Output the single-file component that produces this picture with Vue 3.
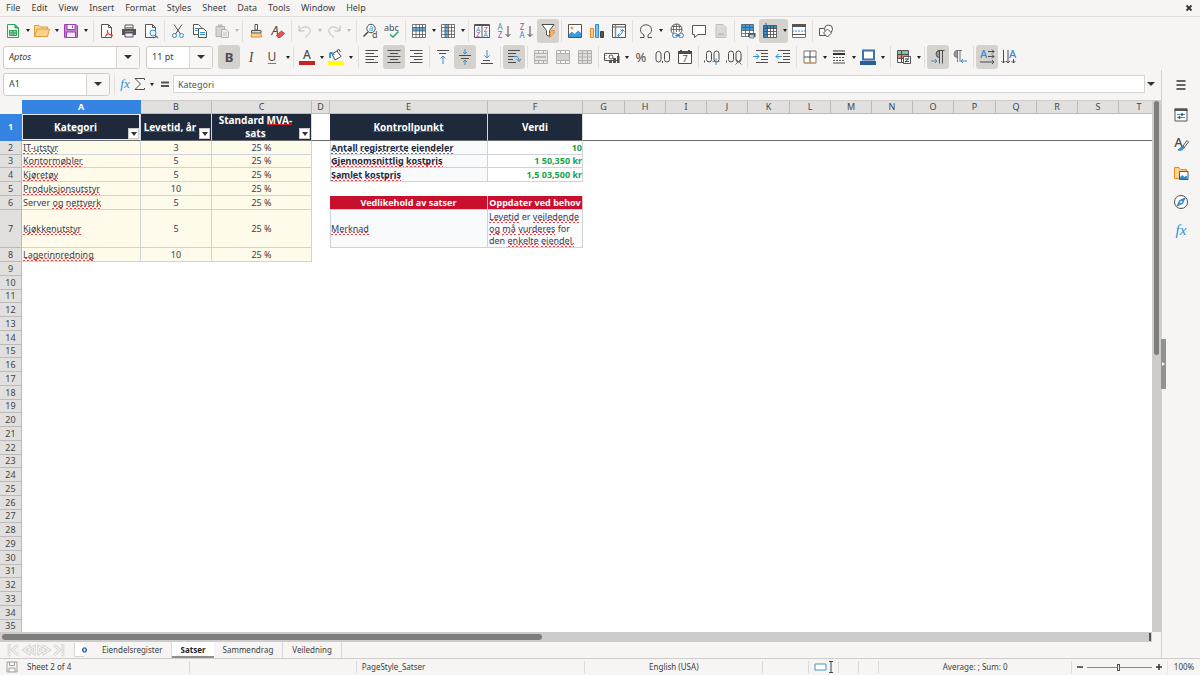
<script setup>
import { ref } from 'vue'

const G = '#4d4d4d'
const B = '#2f8fd3'
const line = (d, c = G, w = 1) => `<path d="${d}" fill="none" stroke="${c}" stroke-width="${w}"/>`
const sheetGrid = '<path d="M1.500 1.500H14.500V14.500H1.500Z" fill="#fff"/>'
const icons = {
  new: '<path d="M2.500 1.500H10L13.500 5V14.500H2.500Z" fill="#eef8f0" stroke="#31a354"/><path d="M10 1.500V5H13.500" fill="#31a354" stroke="#31a354"/><path d="M4.500 7.500H11.500V12.500H4.500ZM4.500 10H11.500M8 7.500V12.500" fill="#31a354" fill-opacity=".5" stroke="#31a354"/>',
  open: '<path d="M.5 13.500V2.500H5L6.500 4H13.500V6" fill="#f9d79b" stroke="#e39a37"/><path d="M.5 13.500L3 6H15.500L13.500 13.500Z" fill="#fbd28d" stroke="#e39a37"/>',
  save: '<path d="M1.500 1.500H13L14.500 3V14.500H1.500Z" fill="#c481d2" stroke="#9a3fae"/><path d="M4 1.500H12V6.500H4Z" fill="#fff" stroke="#9a3fae"/><path d="M3.500 9H12.500V14.500H3.500Z" fill="#f7eafa" stroke="#9a3fae"/><path d="M9.500 2.500V5" stroke="#9a3fae"/>',
  pdf: '<path d="M2.500 1.500H9.500L12.500 4.500V14.500H2.500Z" fill="#fff" stroke="#555"/><path d="M9.500 1.500V4.500H12.500" fill="none" stroke="#555"/><path d="M8 7C9 7 9 10 7 13C6.500 14 5.500 13 7.500 12C10 11 14 11.500 14 12.500C13 14 9 11 8.500 8Z" fill="none" stroke="#e0434d"/>',
  print: '<path d="M4 2H12V6H4Z" fill="#fff" stroke="#555"/><path d="M1 6H15V12H1Z" fill="#555"/><path d="M3.500 4.500H12.500M4 8.500H12" stroke="#3aa0e0"/><path d="M4 10H12V14H4Z" fill="#eef" stroke="#555"/>',
  preview: '<path d="M2.500 1.500H9.500L12.500 4.500V14.500H2.500Z" fill="#fff" stroke="#555"/><path d="M9.500 1.500V4.500H12.500" fill="none" stroke="#555"/><circle cx="10" cy="10" r="3" fill="#e9f4fc" stroke="#3a8fd0"/><path d="M12 12L15 15" stroke="#3a8fd0" stroke-width="1.500"/>',
  cut: line('M4 1.500L10.500 11M12 1.500L5.500 11') + '<circle cx="4.500" cy="12.500" r="2" fill="none" stroke="#2f8fd3"/><circle cx="11.500" cy="12.500" r="2" fill="none" stroke="#2f8fd3"/>',
  copy: '<path d="M1.500 1.500H6.500L9.500 4.500V11.500H1.500Z" fill="#fff" stroke="#555"/><path d="M6.500 5.500H11.500L14.500 8.500V14.500H6.500Z" fill="#fff" stroke="#555"/>' + line('M3 5.500H6M3 7.500H5.500M8 9.500H13M8 11.500H13', B),
  paste: '<path d="M2 3.500H10.500V13.500H2Z" fill="#d8d6d4" stroke="#b3b1af"/><path d="M4 1.500H8.500V4.500H4Z" fill="#bbb"/><path d="M7.500 6.500H12L14.500 9V14.500H7.500Z" fill="#eee" stroke="#b3b1af"/><path d="M9 10H13M9 12H13" stroke="#c2c0be"/>',
  brush: '<path d="M7 1.500H9.500V7H7Z" fill="#fff" stroke="#555"/><path d="M3.500 7.500H13V10H3.500Z" fill="#ddd" stroke="#555"/><path d="M3.500 10.500H13L13.500 14H3Z" fill="#fbd28d" stroke="#e38a27"/>',
  clear: '<text x="1.500" y="11.500" font-family="Noto Sans" font-style="italic" font-size="13" fill="#4d4d4d">A</text><path d="M6.500 12.500L11.500 8L14.500 10.500L10 14.500H8Z" fill="#e8505b" stroke="#d9343f"/>',
  undo: line('M2 2.500V8H7.500M2 8C4 4 11 2 13 6.500C14 10 10.500 12 8 14.500', '#bdbbb9'),
  redo: line('M14 2.500V8H8.500M14 8C12 4 5 2 3 6.500C2 10 5.500 12 8 14.500', '#bdbbb9'),
  find: '<circle cx="9" cy="5.500" r="4.200" fill="#fff" stroke="#4d4d4d"/><path d="M6 9L1.500 13.500" stroke="#4d4d4d" stroke-width="1.600"/><text x="6.800" y="8" font-family="Noto Sans" font-size="8" fill="#2f8fd3">a</text><text x="10" y="15" font-family="Noto Sans" font-size="9" fill="#4d4d4d">d</text>',
  spell: '<text x="0" y="8" font-family="Noto Sans" font-size="9" fill="#4d4d4d">abc</text>' + line('M6 11.500L9 14L14.500 8.500', '#2aa564', 1.5),
  row: sheetGrid + '<path d="M1.500 4.500H14.500V8H1.500Z" fill="#59b1ec"/>' + line('M1.500 1.500H14.500V14.500H1.500ZM1.500 4.500H14.500M1.500 8H14.500M1.500 11.500H14.500M5 1.500V14.500M8.500 1.500V14.500M11.500 1.500V14.500', '#555', .8),
  col: sheetGrid + '<path d="M5 1.500H8.500V14.500H5Z" fill="#59b1ec"/>' + line('M1.500 1.500H14.500V14.500H1.500ZM1.500 4.500H14.500M1.500 8H14.500M1.500 11.500H14.500M5 1.500V14.500M8.500 1.500V14.500M11.500 1.500V14.500', '#555', .8),
  sort: '<path d="M.5 1.500H15.500V14.500H.5ZM8 1.500V14.500M.5 2.500H15.500" fill="#fff" stroke="#555"/><g font-family="Noto Sans" font-size="7" text-anchor="middle"><text x="4.300" y="8.500" fill="#2f8fd3">A</text><text x="4.300" y="14" fill="#a845ba">Z</text><text x="11.700" y="8.500" fill="#a845ba">Z</text><text x="11.700" y="14" fill="#2f8fd3">A</text></g>',
  az: '<g font-family="Noto Sans" font-size="8" text-anchor="middle"><text x="4" y="7" fill="#2f8fd3">A</text><text x="4" y="14.500" fill="#a845ba">Z</text></g>' + line('M12 3V13.500M9.500 11L12 13.500L14.500 11'),
  za: '<g font-family="Noto Sans" font-size="8" text-anchor="middle"><text x="4" y="7" fill="#a845ba">Z</text><text x="4" y="14.500" fill="#2f8fd3">A</text></g>' + line('M12 3V13.500M9.500 11L12 13.500L14.500 11'),
  filter: '<path d="M2 1.500H14L9.500 7.500V13.500L6.500 12V7.500Z" fill="#fff" stroke="#4d4d4d"/><path d="M11.500 7.500H14.500L13 10H14.500L9.500 14.500L10.500 11H9.500Z" fill="#f9bd72" stroke="#e8861d" stroke-width=".8"/>',
  image: '<path d="M1.500 1.500H14.500V14.500H1.500Z" fill="#fff" stroke="#555"/><path d="M2 14V11L5 8.500L7.500 11L11 7.500L14 10V14Z" fill="#3d9bdc"/><circle cx="5" cy="5" r="1.500" fill="#f0a030"/>',
  chart: '<path d="M1.500 5.500H4.500V14.500H1.500Z" fill="#fbd28d" stroke="#e38a27"/><path d="M6.500 1.500H9.500V14.500H6.500Z" fill="#7fc1ef" stroke="#2f8fd3"/><path d="M11.500 8.500H14.500V14.500H11.500Z" fill="#555" stroke="#444"/>',
  pivot: '<path d="M1.500 1.500H14.500V14.500H1.500Z" fill="#fff" stroke="#555"/>' + line('M2 4H14M4.500 2V14', '#888', 1.5) + line('M7 12.500C10 12.500 11.500 10 11.500 7M9.500 8.500L11.500 6.500L13.500 8.500M8.500 10.500L6.500 12.500L8.500 14', B),
  omega: line('M2 14.500H6V12C3.500 10.500 2.500 9 2.500 6.800C2.500 3.500 5 1.800 8 1.800C11 1.800 13.500 3.500 13.500 6.800C13.500 9 12.500 10.500 10 12V14.500H14'),
  link: '<circle cx="7.500" cy="6.500" r="5.500" fill="#fff" stroke="#555"/>' + line('M2 6.500H13M7.500 1V9M3 3.500H12M5 1.800Q3.500 6 5 10M10 1.800Q11.500 6 10 9', '#555', .8) + '<g fill="#f6f5f4" stroke="#2f7fd6"><rect x="3.500" y="10.500" width="5" height="4" rx="2"/><rect x="9.500" y="10.500" width="5" height="4" rx="2"/></g><path d="M6.500 12.500H11.500" stroke="#2f7fd6"/>',
  comment: '<path d="M1.500 2.500H14.500V11.500H7L3.500 14.500V11.500H1.500Z" fill="#fff" stroke="#555"/>',
  hf: '<path d="M3 1.500H10L13 4.500V14.500H3Z" fill="#dddbd9" stroke="#c2c0be"/><path d="M5 10H11V12.500H5Z" fill="#c4c2c0"/>',
  parea: '<path d="M1.500 1.500H13.500V13.500H1.500Z" fill="#fff"/><path d="M1.500 1.500H13.500V7.500H1.500Z" fill="#3d9bdc"/>' + line('M1.500 1.500H13.500V13.500H1.500ZM1.500 4.500H13.500M1.500 7.500H13.500M1.500 10.500H13.500M5.500 1.500V13.500M9.500 1.500V13.500', '#555', .8) + '<path d="M8 10H15.500V14H8Z" fill="#555"/><path d="M9.500 11.500H14V15H9.500Z" fill="#a8d4f2" stroke="#555" stroke-width=".6"/>',
  freeze: '<path d="M1.500 2.500H14.500V14.500H1.500Z" fill="#fff"/><path d="M1.500 2.500H14.500V5.500H5.500V14.500H1.500Z" fill="#2f8fd3"/>' + line('M1.500 2.500H14.500V14.500H1.500ZM1.500 5.500H14.500M1.500 8.500H14.500M1.500 11.500H14.500M5.500 2.500V14.500M8.500 2.500V14.500M11.500 2.500V14.500', '#444', .8) + line('M4 0V5M1 3H6', '#1c6db0'),
  split: '<path d="M1.500 1.500H14.500V14.500H1.500Z" fill="#fff" stroke="#777"/><path d="M1 1H15V4H1ZM1 11H15V12H1Z" fill="#555"/><path d="M1 8H15" stroke="#2f8fd3" stroke-dasharray="2 1"/>',
  shapes: '<path d="M1.500 5.500H8.500V12.500H1.500Z" fill="#fff" stroke="#555"/><circle cx="10.500" cy="6" r="4" fill="#fff" stroke="#555"/><path d="M9.500 6L13.500 10L9.500 14L5.500 10Z" fill="#fff" stroke="#555"/>',
  bold: '<text x="8" y="13" text-anchor="middle" font-family="Noto Sans" font-weight="bold" font-size="13" fill="#4d4d4d">B</text>',
  italic: '<text x="8" y="13" text-anchor="middle" font-family="Liberation Serif" font-style="italic" font-size="14" fill="#4d4d4d">I</text>',
  underline: '<text x="7" y="12" text-anchor="middle" font-family="Noto Sans" font-size="12" fill="#4d4d4d">U</text>' + line('M3 14.500H11', B),
  fontcolor: '<text x="8" y="10" text-anchor="middle" font-family="Noto Sans" font-weight="500" font-size="12" fill="#4d4d4d">A</text><path d="M0 12H16V16H0Z" fill="#c9211e"/>',
  hilite: '<path d="M4 5L9 2L13 7.500L7 11Z" fill="#fff" stroke="#4d4d4d"/><path d="M2 9V4.500C2 3.500 5 3.500 6 6" fill="none" stroke="#2f8fd3" stroke-width="1.800"/><path d="M9 2L10.500 0L12.500 3" fill="none" stroke="#4d4d4d"/><path d="M0 12H16V16H0Z" fill="#ffff00"/>',
  left: line('M1.500 1.500H14M1.500 4.500H10M1.500 7.500H14M1.500 10.500H10M1.500 13.500H14'),
  center: line('M1.500 1.500H14.500M4 4.500H12M1.500 7.500H14.500M4 10.500H12M1.500 13.500H14.500'),
  right: line('M2 1.500H14.500M6 4.500H14.500M2 7.500H14.500M6 10.500H14.500M2 13.500H14.500'),
  top: line('M2 1.500H14M4 4.500H11') + line('M8 7V15M5.500 9.500L8 7L10.500 9.500', B),
  middle: line('M2 6.500H14M4 9.500H12') + line('M8 0V5M6 3L8 5L10 3M8 16V11M6 13L8 11L10 13', B),
  bottom: line('M2 14.500H14M4 11.500H11') + line('M8 1V9M5.500 6.500L8 9L10.500 6.500', B),
  wrap: line('M2 1.500H14M2 4.500H10M2 7.500H8M2 10.500H7M2 13.500H10') + line('M8 7.500H10C12 7.500 13 9 13 12.500M10.500 10L13 12.500L15 10', B),
  merge1: '<path d="M1.500 2.500H14.500V13.500H1.500Z" fill="#e6e4e2"/>' + line('M1.500 1.500H14.500V14.500H1.500ZM1.500 4.500H14.500M1.500 11.500H14.500M5.500 1.500V4.500M10.500 1.500V4.500M5.500 11.500V14.500M10.500 11.500V14.500', '#b2b0ae') + line('M3 8H13', '#c0bebc', 2),
  merge2: '<path d="M1.500 4.500H14.500V11.500H1.500Z" fill="#d4d2d0"/>' + line('M1.500 1.500H14.500V14.500H1.500ZM1.500 4.500H14.500M1.500 11.500H14.500M5.500 1.500V4.500M10.500 1.500V4.500M5.500 11.500V14.500M10.500 11.500V14.500', '#b2b0ae'),
  merge3: '<path d="M1.500 1.500H14.500V14.500H1.500Z" fill="#e0dedc"/>' + line('M1.500 1.500H14.500V14.500H1.500ZM1.500 4.500H14.500M1.500 8H14.500M1.500 11.500H14.500M5.500 1.500V14.500M10.500 1.500V14.500', '#b2b0ae'),
  currency: '<path d="M.5 4.500H14.500V11.500H.5Z" fill="#fff" stroke="#555"/><circle cx="7" cy="8" r="2" fill="none" stroke="#555"/><path d="M5 12H8V14H5ZM9 9H12V14H9ZM13 7H15.500V14H13Z" fill="#555"/><path d="M2 6V7M2 9V10" stroke="#555"/>',
  percent: '<text x="8" y="13" text-anchor="middle" font-family="Noto Sans" font-size="13" fill="#4d4d4d">%</text>',
  number: '<g fill="none" stroke="#4d4d4d"><rect x="1" y="2.500" width="5" height="10.500" rx="2.500"/><rect x="9.500" y="2.500" width="5" height="10.500" rx="2.500"/></g><path d="M7.500 12V14" stroke="#4d4d4d"/>',
  date: '<path d="M1.500 2.500H14.500V14.500H1.500Z" fill="#fff" stroke="#4d4d4d"/><path d="M1 2H15V5H1ZM3 1H5V3H3ZM11 1H13V3H11Z" fill="#4d4d4d"/><text x="8" y="13" text-anchor="middle" font-family="Noto Sans" font-size="9" fill="#4d4d4d">7</text>',
  decadd: '<g fill="none" stroke="#4d4d4d"><rect x="2.500" y="2" width="5" height="11" rx="2.500"/><rect x="10" y="2" width="5" height="11" rx="2.500"/></g><path d="M.5 11.500V13.500" stroke="#4d4d4d"/><path d="M8.500 12.500H15.500M12 9.500V16" stroke="#2f8fd3"/>',
  decdel: '<g fill="none" stroke="#4d4d4d"><rect x="2.500" y="2" width="5" height="11" rx="2.500"/><rect x="10" y="2" width="5" height="11" rx="2.500"/></g><path d="M.5 11.500V13.500" stroke="#4d4d4d"/><path d="M9.500 9.500L15.500 15.500M15.500 9.500L9.500 15.500" stroke="#e0434d"/>',
  indent: line('M3 1.500H15M8 4.500H15M8 7.500H15M8 10.500H15M3 13.500H15') + line('M0 7.500H6M3.500 5L6 7.500L3.500 10', B),
  outdent: line('M3 1.500H15M8 4.500H15M8 7.500H15M8 10.500H15M3 13.500H15') + line('M7 7.500H1M3.500 5L1 7.500L3.500 10', B),
  borders: '<path d="M2 2H14V14H2Z" fill="#fff" stroke="#777"/>' + line('M8 2V14M2 8H14') + line('M2 14H14', '#e39a37'),
  bstyle: line('M2 2H14', '#333', 1) + line('M2 5H14', '#333', 2) + '<path d="M2 8.500H14M2 11.500H14" stroke="#555" stroke-dasharray="2 1"/>' + line('M2 14H14'),
  bcolor: '<path d="M3 1.500H14V10.500H3Z" fill="#fff" stroke="#3a72ad" stroke-width="2"/><path d="M0 12H16V16H0Z" fill="#2a6099"/>',
  cond: '<path d="M1.500 1.500H12.500V13.500H1.500Z" fill="#fff" stroke="#555"/><path d="M2 2H12V5H2Z" fill="#7ac79a"/><path d="M2 6H12V9H2Z" fill="#f0806a"/>' + line('M1.500 5.500H12.500M1.500 9.500H12.500M5.500 2V13') + '<path d="M7.500 7.500H14.500V14.500H7.500Z" fill="#fff" stroke="#555"/>' + line('M9 10H13M9 12.500H13M12.500 8.500L9.500 13.500'),
  ltr: '<path d="M9.500 1.500A3.500 3.500 0 0 0 9.500 8.500Z" fill="#9c9a98" stroke="#555"/>' + line('M9.500 1V14.500M12.500 1V14.500M8 1.500H14.500') + line('M1 12H7M5 10L7 12L5 14', B),
  rtl: '<path d="M5.500 1.500A3.500 3.500 0 0 0 5.500 8.500Z" fill="#9c9a98" stroke="#777"/>' + line('M5.500 1V13M8 1V13M4 1.500H10', '#777') + line('M15 12H9M11 10L9 12L11 14', B),
  dirh: '<text x="4.500" y="9" text-anchor="middle" font-family="Noto Sans" font-weight="500" font-size="11" fill="#2f8fd3">A</text>' + line('M9 2.500H15M13 .5L15 2.500L13 4.500M9 7.500H15M13 5.500L15 7.500L13 9.500M1 13H15M13 11L15 13L13 15'),
  dirv: '<text x="11.500" y="9" text-anchor="middle" font-family="Noto Sans" font-weight="500" font-size="11" fill="#2f8fd3">A</text>' + line('M2.500 1V14M.5 12L2.500 14L4.500 12M7 1V14M5 12L7 14L9 12M12.500 10V14M10.500 12L12.500 14L14.500 12'),
  fx: '<text x="8" y="12" text-anchor="middle" font-family="Liberation Serif" font-style="italic" font-size="15" fill="#2f8fd3">fx</text>',
  sum: line('M12.500 4V2.500H3L8.500 8L3 13.500H12.500V12'),
  equals: line('M4 6.500H12M4 10H12', '#555', 2),
  menu: line('M3.500 4H12.500M3.500 8H12.500M3.500 12H12.500', '#333', 1.4),
  props: '<path d="M2 2H14V14H2Z" fill="#fff" stroke="#555"/><path d="M1.500 1.500H14.500V4H1.500Z" fill="#555"/>' + line('M4 7.500H12M4 10.500H12', '#2f8fd3') + line('M9 6V9M6.500 9V12', '#555', 1.5),
  styles: '<text x="5.500" y="11" text-anchor="middle" font-family="Noto Sans" font-weight="500" font-size="13" fill="#4d4d4d">A</text><path d="M10 10L14 4.500L15.500 6L11.500 11Z" fill="#fff" stroke="#555"/><path d="M10 10L11.500 11.500C10 14.500 7 14.500 5 14C7.500 13 7.500 10.500 10 10Z" fill="#3d9bdc" stroke="#2f7fbd"/>',
  gallery: '<path d="M1.500 13.500V2.500H6L7.500 4.500H13.500V13.500Z" fill="#fbd28d" stroke="#e38a27"/><path d="M6.500 6.500H15V14.500H6.500Z" fill="#fff" stroke="#555"/><path d="M7 14V12L9.500 10L11.500 12L13 10.500L14.500 12V14Z" fill="#2f8fd3"/>',
  navigator: '<circle cx="8" cy="8" r="6.500" fill="#fff" stroke="#4d4d4d"/><path d="M12 4L9.500 9.500L4 12L6.500 6.500Z" fill="#3d9bdc" stroke="#2474b5" stroke-width=".8"/><circle cx="8" cy="8" r="1" fill="#fff"/>'
}

const caret = (name, label, o = {}) => ({ icon: name, label, caret: true, ...o })
const b = (name, label, o = {}) => ({ icon: name, label, ...o })
const sep = { sep: true }
const wide = { sep: true, wide: true }

const standardBar = [
  caret('new', 'New'), caret('open', 'Open'), caret('save', 'Save'), wide,
  b('pdf', 'Export as PDF'), b('print', 'Print'), b('preview', 'Print Preview'), sep,
  b('cut', 'Cut'), b('copy', 'Copy'), caret('paste', 'Paste', { off: true }), sep,
  b('brush', 'Clone Formatting'), b('clear', 'Clear Formatting'), sep,
  caret('undo', 'Undo', { off: true }), caret('redo', 'Redo', { off: true }), wide,
  b('find', 'Find and Replace'), b('spell', 'Spelling'), sep,
  caret('row', 'Row'), caret('col', 'Column'), sep,
  b('sort', 'Sort'), b('az', 'Sort Ascending'), b('za', 'Sort Descending'), b('filter', 'AutoFilter', { on: true }), sep,
  b('image', 'Insert Image'), b('chart', 'Insert Chart'), b('pivot', 'Pivot Table'), sep,
  caret('omega', 'Special Character', { roomy: true }), b('link', 'Hyperlink'), b('comment', 'Comment'), b('hf', 'Headers and Footers', { off: true }), sep,
  b('parea', 'Print Area'), caret('freeze', 'Freeze Panes', { on: true }), b('split', 'Split Window'), sep,
  b('shapes', 'Draw Functions')
]
const formatBar = [
  b('bold', 'Bold', { on: true }), b('italic', 'Italic'), caret('underline', 'Underline'), sep,
  caret('fontcolor', 'Font Color'), caret('hilite', 'Background Color'), wide,
  b('left', 'Align Left'), b('center', 'Center', { on: true }), b('right', 'Align Right'), sep,
  b('top', 'Align Top'), b('middle', 'Center Vertically', { on: true }), b('bottom', 'Align Bottom'), sep,
  b('wrap', 'Wrap Text', { on: true }), sep,
  b('merge1', 'Merge and Center', { off: true }), b('merge2', 'Merge Cells', { off: true }), b('merge3', 'Unmerge Cells', { off: true }), sep,
  caret('currency', 'Currency'), b('percent', 'Percent'), b('number', 'Number'), b('date', 'Date'), sep,
  b('decadd', 'Add Decimal Place'), b('decdel', 'Delete Decimal Place'), sep,
  b('indent', 'Increase Indent'), b('outdent', 'Decrease Indent'), sep,
  caret('borders', 'Borders'), caret('bstyle', 'Border Style'), caret('bcolor', 'Border Color'), wide,
  caret('cond', 'Conditional Formatting'), sep,
  b('ltr', 'Left-To-Right', { on: true }), b('rtl', 'Right-To-Left'), sep,
  b('dirh', 'Text Direction Horizontal', { on: true }), b('dirv', 'Text Direction Vertical')
]

const menus = ['File', 'Edit', 'View', 'Insert', 'Format', 'Styles', 'Sheet', 'Data', 'Tools', 'Window', 'Help']
const decks = [['menu', 'Sidebar Settings'], ['props', 'Properties'], ['styles', 'Styles'], ['gallery', 'Gallery'], ['navigator', 'Navigator'], ['fx', 'Functions']]
const tabs = ['Eiendelsregister', 'Satser', 'Sammendrag', 'Veiledning']
const navs = [
  ['First sheet', 'M3.500 1V15M14 2L7 8L14 14'],
  ['Previous sheet', 'M8 4L2 8L8 12ZM14 4L8 8L14 12Z'],
  ['Next sheet', 'M2 4L8 8L2 12ZM8 4L14 8L8 12Z'],
  ['Last sheet', 'M12.500 1V15M2 2L9 8L2 14']
]

const fontName = ref('Aptos')
const fontSize = ref('11 pt')
const cellName = ref('A1')
const formula = ref('Kategori')
const zoom = ref(48)

const columns = 'ABCDEFGHIJKLMNOPQRSTUVWXYZ'.split('')
const rowCount = 60

// Words inside square brackets carry the spell-check underline.
const cells = {
  A1: ['[Kategori]', 'head'], B1: ['[Levetid], [år]', 'head'], C1: ['Standard [MVA-] [sats]', 'head'],
  E1: ['[Kontrollpunkt]', 'head'], F1: ['Verdi', 'head'],
  E2: ['[Antall] [registrerte] [eiendeler]', 'check'], F2: ['10', 'value'],
  E3: ['[Gjennomsnittlig] [kostpris]', 'check'], F3: ['1 50,350 kr', 'value'],
  E4: ['[Samlet] [kostpris]', 'check'], F4: ['1,5 03,500 kr', 'value'],
  E6: ['[Vedlikehold] [av] [satser]', 'alert'], F6: ['[Oppdater] [ved] [behov]', 'alert'],
  E7: ['[Merknad]', 'note'],
  F7: ['[Levetid] er [veiledende] [og] [må] [vurderes] for den [enkelte] [eiendel.]', 'note']
}
const rates = [
  ['[IT-utstyr]', '3'], ['[Kontormøbler]', '5'], ['[Kjøretøy]', '5'], ['[Produksjonsutstyr]', '10'],
  ['Server [og] [nettverk]', '5'], ['[Kjøkkenutstyr]', '5'], ['[Lagerinnredning]', '10']
]
rates.forEach(([name, years], i) => {
  cells['A' + (i + 2)] = [name, 'rate']
  cells['B' + (i + 2)] = [years, 'rate mid']
  cells['C' + (i + 2)] = ['25 %', 'rate mid']
})
const segments = (text) => text.split(/(\[[^\]]+\])/).filter(Boolean)
  .map((s) => s[0] === '[' ? { text: s.slice(1, -1), bad: true } : { text: s, bad: false })
const rows = Array.from({ length: rowCount }, (_, r) => ({
  n: r + 1,
  cells: columns.map((c) => {
    const id = c + (r + 1)
    const cell = cells[id]
    return { id, kind: cell ? cell[1] : '', parts: cell ? segments(cell[0]) : [] }
  })
}))
</script>

<template>
  <div class="app">
    <nav class="menubar" aria-label="Main menu">
      <button v-for="m in menus" :key="m" type="button">{{ m }}</button>
      <button type="button" class="close" aria-label="Close document">
        <svg width="8" height="8" viewBox="0 0 8 8"><path d="M1.500 1.500L6.500 6.500M6.500 1.500L1.500 6.500" stroke="#333" stroke-width="1.800" /></svg>
      </button>
    </nav>

    <div class="toolbar" role="toolbar" aria-label="Standard">
      <template v-for="(t, i) in standardBar" :key="i">
        <span v-if="t.sep" class="sep" :class="{ wide: t.wide }"></span>
        <span v-else class="tool" :class="{ on: t.on, off: t.off, roomy: t.roomy }">
          <button type="button" class="ico" :aria-label="t.label" :disabled="t.off">
            <svg width="16" height="16" viewBox="0 0 16 16" v-html="icons[t.icon]"></svg>
          </button>
          <button v-if="t.caret" type="button" class="caret" :aria-label="t.label + ' options'"></button>
        </span>
      </template>
    </div>

    <div class="toolbar format" role="toolbar" aria-label="Formatting">
      <div class="combo font">
        <input v-model="fontName" aria-label="Font name">
        <button type="button" aria-label="Choose font"></button>
      </div>
      <div class="combo size">
        <input v-model="fontSize" aria-label="Font size">
        <button type="button" aria-label="Choose font size"></button>
      </div>
      <template v-for="(t, i) in formatBar" :key="i">
        <span v-if="t.sep" class="sep" :class="{ wide: t.wide }"></span>
        <span v-else class="tool" :class="{ on: t.on, off: t.off }">
          <button type="button" class="ico" :aria-label="t.label" :disabled="t.off">
            <svg width="16" height="16" viewBox="0 0 16 16" v-html="icons[t.icon]"></svg>
          </button>
          <button v-if="t.caret" type="button" class="caret" :aria-label="t.label + ' options'"></button>
        </span>
      </template>
    </div>

    <div class="body">
      <main class="work">
        <div class="formulabar">
          <div class="combo name">
            <input v-model="cellName" aria-label="Name box">
            <button type="button" aria-label="Choose range"></button>
          </div>
          <span class="sep"></span>
          <button type="button" class="fbtn" aria-label="Function wizard"><svg width="14" height="14" viewBox="0 0 16 16" v-html="icons.fx"></svg></button>
          <button type="button" class="fbtn" aria-label="Select function"><svg width="16" height="16" viewBox="0 0 16 16" v-html="icons.sum"></svg></button>
          <button type="button" class="caret" aria-label="Function options"></button>
          <button type="button" class="fbtn eq" aria-label="Formula"><svg width="16" height="16" viewBox="0 0 16 16" v-html="icons.equals"></svg></button>
          <input v-model="formula" class="formula" aria-label="Input line">
          <button type="button" class="expand" aria-label="Expand formula bar"></button>
        </div>

        <div class="sheet">
          <div class="grid">
            <table>
              <colgroup>
                <col class="c-head">
                <col v-for="c in columns" :key="c" :class="'c-' + c">
              </colgroup>
              <thead>
                <tr>
                  <td class="corner"></td>
                  <th v-for="c in columns" :key="c" scope="col" :class="{ sel: c === 'A' }">{{ c }}</th>
                </tr>
              </thead>
              <tbody>
                <tr v-for="r in rows" :key="r.n" :class="'r' + r.n">
                  <th scope="row" :class="{ sel: r.n === 1 }">{{ r.n }}</th>
                  <td v-for="c in r.cells" :key="c.id" :class="[c.kind, c.id]"><template v-for="(p, i) in c.parts" :key="i"><span :class="{ bad: p.bad }">{{ p.text }}</span></template><button v-if="c.id === 'A1' || c.id === 'B1' || c.id === 'C1'" type="button" class="filter" :aria-label="'Filter column ' + c.id[0]"></button></td>
                </tr>
              </tbody>
            </table>
          </div>
          <div class="vscroll"><div class="thumb"></div></div>
        </div>
        <div class="hscroll"><div class="thumb"></div><i></i></div>

        <div class="tabs">
          <div class="navs">
            <button v-for="n in navs" :key="n[0]" type="button" :aria-label="n[0]" disabled>
              <svg width="16" height="14" viewBox="0 0 16 16" fill="none"><path :d="n[1]" stroke="#cfcdcb" stroke-width="3" /><path :d="n[1]" stroke="#f6f5f4" stroke-width="1.200" /></svg>
            </button>
          </div>
          <button type="button" class="add" aria-label="Add sheet">
            <svg width="16" height="14" viewBox="0 0 16 14"><path d="M2 0H12V14H2Z" fill="#fff" /><path d="M2.500 0V13.500H12" fill="none" stroke="#d8d6d4" /><path d="M12.500 4.500V9.500M10 7H15" stroke="#2f62ad" stroke-width="3" /><path d="M12.500 5.500V8.500M11 7H14" stroke="#dfeaf8" /></svg>
          </button>
          <button v-for="t in tabs" :key="t" type="button" class="tab" :class="{ active: t === 'Satser' }">{{ t }}</button>
        </div>
      </main>

      <aside class="sidebar" aria-label="Sidebar">
        <button v-for="d in decks" :key="d[0]" type="button" :aria-label="d[1]">
          <svg width="16" height="16" viewBox="0 0 16 16" v-html="icons[d[0]]"></svg>
        </button>
        <button type="button" class="handle" aria-label="Show sidebar"></button>
      </aside>
    </div>

    <footer class="status">
      <span class="disk">
        <svg width="12" height="12" viewBox="0 0 12 12" fill="none" stroke="#a19f9d"><path d="M1 1H11V11H1ZM3.500 1V4.500H8.500V1M3 11V7H9V11" /></svg>
      </span>
      <span class="st count">Sheet 2 of 4</span>
      <span class="st blank"></span>
      <span class="st page">PageStyle_Satser</span>
      <span class="st lang">English (USA)</span>
      <span class="st insert"></span>
      <span class="st mode">
        <svg width="20" height="12" viewBox="0 0 20 12" fill="none"><path d="M1 3H12V9H1Z" fill="#fff" stroke="#3f93cf" /><path d="M15 .5H19M17 .5V11.500M15 11.500H19" stroke="#444" /></svg>
      </span>
      <span class="st small"></span>
      <span class="st small"></span>
      <span class="st calc">Average: ; Sum: 0</span>
      <span class="st zoomer">
        <button type="button" aria-label="Zoom out"><svg width="8" height="8" viewBox="0 0 8 8"><path d="M1 4H7" stroke="#333" stroke-width="1.500" /></svg></button>
        <input v-model="zoom" type="range" min="0" max="100" aria-label="Zoom">
        <button type="button" aria-label="Zoom in"><svg width="8" height="8" viewBox="0 0 8 8"><path d="M1 4H7M4 1V7" stroke="#333" stroke-width="1.500" /></svg></button>
      </span>
      <span class="st percent">100%</span>
    </footer>
  </div>
</template>

<style>
body { margin: 0; background: #f6f5f4; overflow: hidden; }
</style>

<style scoped>
.app { display: flex; flex-direction: column; height: 100vh; overflow: hidden; background: #f6f5f4; color: #3d3d3d; font-family: "Noto Sans", sans-serif; font-size: 9px; line-height: 12px; }
button, input { font: inherit; color: inherit; border: 0; background: none; padding: 0; margin: 0; box-sizing: border-box; }
svg { display: block; flex: none; overflow: visible; }

.menubar { display: flex; align-items: center; height: 16px; flex: none; border-bottom: 1px solid #e0dedc; padding-left: 6px; gap: 11px; }
.menubar .close { margin: 0 7px 0 auto; }

.toolbar { display: flex; align-items: center; height: 27px; flex: none; padding-left: 2px; }
.format { height: 26px; padding-left: 3px; }
.tool { display: flex; height: 24px; border-radius: 3px; flex: none; }
.tool.on { background: #d5d1cd; }
.ico { width: 22px; height: 24px; display: grid; place-items: center; }
.caret { width: 7px; display: grid; place-items: center; }
.roomy { padding-right: 2px; }
.caret::after, .combo button::after, .expand::after { content: ""; border: 2px solid transparent; border-top: 3px solid #222; border-bottom: 0; }
.off .caret::after { border-top-color: #bcbab8; }
.sep { width: 5px; height: 22px; flex: none; background: linear-gradient(#e2e0de, #e2e0de) 2px 0 / 1px 100% no-repeat; }
.sep.wide { width: 7px; background-position: 4px 0; }

.combo { display: flex; height: 23px; box-sizing: border-box; border: 1px solid #cfcbc7; border-radius: 3px; background: #fff; overflow: hidden; flex: none; }
.combo input { flex: 1; min-width: 0; padding-left: 5px; outline: 0; }
.combo button { width: 23px; display: grid; place-items: center; border-left: 1px solid #d8d5d2; background: #f8f7f6; }
.combo button::after, .expand::after { border-width: 4px 4px 0; border-top-color: #333; }
.font { width: 137px; margin-right: 6px; }
.font input { font-style: italic; }
.size { width: 67px; margin-right: 5px; }
.name { width: 107px; }

.body { display: flex; flex: 1; min-height: 0; }
.work { display: flex; flex-direction: column; flex: 1; min-width: 0; }
.formulabar { display: flex; align-items: center; height: 30px; flex: none; padding: 0 5px 2px 3px; box-sizing: border-box; }
.formulabar .sep { margin-left: 2px; }
.fbtn { width: 16px; display: grid; place-items: center; margin-right: -1px; }
.fbtn.eq { margin: 0 0 0 2px; }
.formulabar .caret { margin-left: 1px; }
.formula { flex: 1; min-width: 0; height: 18px; border: 1px solid #d8d5d2; background: #fff; padding-left: 4px; outline: 0; color: #555; }
.expand { width: 11px; display: grid; place-items: center; }

.sheet { display: flex; flex: 1; min-height: 0; }
.grid { flex: 1; min-width: 0; overflow: hidden; background: #fff; }
table { table-layout: fixed; width: 0; border-collapse: separate; border-spacing: 0; }
col { width: 41px; }
.c-head { width: 22px; } .c-A { width: 119px; } .c-B { width: 71px; } .c-C { width: 100px; }
.c-D { width: 18px; } .c-E { width: 158px; } .c-F { width: 95px; }
.c-G, .c-K, .c-P, .c-U { width: 42px; }
th { background: #e1e0df; border-right: 1px solid #bdbbb9; border-bottom: 1px solid #bdbbb9; font-weight: 400; color: #444; padding: 0; text-align: center; box-sizing: border-box; }
thead th { height: 14px; border-top: 1px solid #cfcdcb; line-height: 12px; }
.corner { background: #f6f5f4; }
th.sel { background: #3584e4; color: #fff; font-weight: 700; border-color: #3584e4; }
td { padding: 0 1px; box-sizing: border-box; vertical-align: middle; position: relative; color: #334155; }
tbody tr { height: 14px; }
tbody tr:nth-child(4n+3) { height: 13px; }
tbody tr.r1 { height: 27px; }
tbody tr.r7 { height: 38px; }
.r1 td { border-bottom: 1px solid #6b6b6b; }
.rate, .note, .check, .value { border-right: 1px solid #cfd3d8; border-bottom: 1px solid #cfd3d8; }
.rate { background: #fffbeb; }
.mid { text-align: center; }
.head { background: #1e293b; color: #fff; font-weight: 700; font-size: 10px; line-height: 13px; text-align: center; border-right: 1px solid #d5d9e0; }
.check { background: #f8fafc; color: #1e293b; font-weight: 700; }
.value { background: #fff; color: #16a34a; font-weight: 700; text-align: right; padding: 0; }
.alert { background: #c8102e; color: #fff; font-weight: 700; text-align: center; border-right: 1px solid #e5b6be; border-bottom: 1px solid #cfd3d8; padding: 0; }
.note { background: #f8fafc; }
.E2, .E3, .E4, .E7 { border-left: 1px solid #cfd3d8; padding-left: 0; }
.bad { background: linear-gradient(90deg, #e0474c 50%, transparent 50%) 0 100% / 4px 1px repeat-x, linear-gradient(90deg, transparent 50%, #e0474c 50%) 0 10px / 4px 1px repeat-x; }
.head .bad { background: linear-gradient(#d3202e, #d3202e) 0 11px / 100% 1px no-repeat; }
.alert .bad { background: none; }
.A1 { box-shadow: inset 0 0 0 1px #e8ecf2; padding-right: 12px; }
.B1 { padding-right: 13px; white-space: nowrap; }
.C1 { padding: 0 13px 0 1px; }
.filter { position: absolute; right: 1px; bottom: 1px; width: 11px; height: 11px; background: #fff; border: 1px solid #c9c9c9; display: grid; place-items: center; }
.filter::after { content: ""; border: 3px solid transparent; border-top: 4px solid #333; border-bottom: 0; }

.vscroll { width: 9px; flex: none; background: #cdcccb; padding: 1px 2px; box-sizing: border-box; }
.vscroll .thumb { height: 48%; border-radius: 3px; background: #7d7e7c; }
.hscroll { height: 10px; flex: none; display: flex; align-items: center; justify-content: space-between; background: #cdcccb; margin-right: 9px; padding: 0 1px 0 2px; box-sizing: border-box; }
.hscroll .thumb { width: 47%; height: 6px; border-radius: 3px; background: #7d7e7c; }
.hscroll i { width: 2px; height: 8px; background: #555; }

.tabs { display: flex; height: 16px; flex: none; border-bottom: 1px solid #cfcdcb; font-size: 8px; }
.navs { display: flex; padding-left: 5px; }
.navs button { width: 16px; }
.navs button:nth-child(2), .navs button:nth-child(3) { width: 15px; }
.add { width: 16px; margin: 0 5px 0 5px; }
.tab { padding: 0 9px 1px; border-right: 1px solid #dcdad8; }
.tab.active { padding: 0 8px 1px; background: #fff; font-weight: 700; border-right: 0; box-shadow: inset 0 -2px #8f8f8f; color: #222; }

.sidebar { width: 39px; flex: none; box-sizing: border-box; border-left: 1px solid #d3d1cf; border-bottom: 1px solid #cfcdcb; display: flex; flex-direction: column; align-items: center; gap: 13px; padding-top: 7px; position: relative; }
.sidebar button { display: grid; place-items: center; width: 22px; height: 16px; }
.sidebar button:first-child { margin-bottom: 1px; }
.sidebar .handle { position: absolute; left: -1px; top: 269px; width: 5px; height: 50px; background: #929292; }
.handle::after { content: ""; border: 2px solid transparent; border-left: 3px solid #fff; border-right: 0; }

.status { display: flex; align-items: center; height: 16px; flex: none; font-size: 8px; white-space: nowrap; }
.disk { width: 22px; display: grid; place-items: center; padding-left: 2px; box-sizing: border-box; }
.st { height: 12px; box-sizing: border-box; border-left: 1px solid #dcdad8; display: flex; align-items: center; justify-content: center; min-width: 0; }
.count { flex: 1 1 167px; justify-content: flex-start; padding-left: 5px; border-left: 0; }
.blank { flex: 1 1 167px; }
.page { flex: 1 1 229px; justify-content: flex-start; padding-left: 5px; }
.lang { flex: 1 1 178px; }
.insert { flex: 0 0 46px; }
.mode { flex: 0 0 30px; }
.small { flex: 0 0 20px; }
.calc { flex: 1 1 193px; }
.zoomer { flex: 0 0 96px; gap: 3px; }
.zoomer input { width: 65px; height: 8px; appearance: none; background: linear-gradient(#8a8886, #8a8886) 0 50% / 100% 1px no-repeat; }
.zoomer input::-webkit-slider-thumb { appearance: none; width: 3px; height: 7px; border: 1px solid #555; background: #fff; box-sizing: border-box; }
.percent { flex: 0 0 33px; border-left-color: #e6e4e2; }
</style>
